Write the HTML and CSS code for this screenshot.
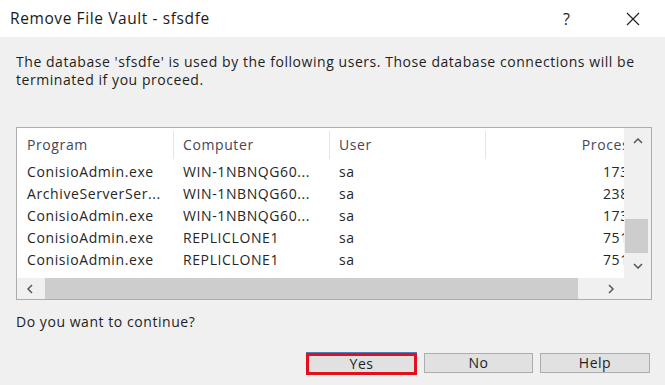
FILE: index.html
```html
<!DOCTYPE html>
<html lang="en">
<head>
    <meta charset="UTF-8">
    <title>Remove File Vault - sfsdfe</title>
    <link rel="stylesheet" href="styles.css">
</head>
<body>
    <div class="dialog">
        <div class="titlebar">
            <span class="title">Remove File Vault - sfsdfe</span>
            <div class="tb-buttons">
                <span class="tb-help">?</span>
                <svg class="tb-close" width="14" height="14" viewBox="0 0 14 14">
                    <path d="M1 1 L13 13 M13 1 L1 13" stroke="#222" stroke-width="1.2" fill="none"/>
                </svg>
            </div>
        </div>

        <div class="content">
            <p class="msg">The database 'sfsdfe' is used by the following users. Those database connections will be terminated if you proceed.</p>

            <div class="listbox">
                <div class="list-main">
                    <div class="list-area">
                        <div class="grid">
                            <div class="hd">Program</div>
                            <div class="hd">Computer</div>
                            <div class="hd">User</div>
                            <div class="hd num">Process ID</div>

                            <div>ConisioAdmin.exe</div><div>WIN-1NBNQG60...</div><div>sa</div><div class="num">17356</div>
                            <div>ArchiveServerSer...</div><div>WIN-1NBNQG60...</div><div>sa</div><div class="num">23812</div>
                            <div>ConisioAdmin.exe</div><div>WIN-1NBNQG60...</div><div>sa</div><div class="num">17324</div>
                            <div>ConisioAdmin.exe</div><div>REPLICLONE1</div><div>sa</div><div class="num">75112</div>
                            <div>ConisioAdmin.exe</div><div>REPLICLONE1</div><div>sa</div><div class="num">75148</div>
                        </div>
                    </div>
                    <div class="vscroll">
                        <div class="arrow">
                            <svg width="10" height="6" viewBox="0 0 10 6"><path d="M1 5 L5 1 L9 5" stroke="#555" stroke-width="1.5" fill="none"/></svg>
                        </div>
                        <div class="vtrack"><div class="vthumb"></div></div>
                        <div class="arrow">
                            <svg width="10" height="6" viewBox="0 0 10 6"><path d="M1 1 L5 5 L9 1" stroke="#555" stroke-width="1.5" fill="none"/></svg>
                        </div>
                    </div>
                </div>
                <div class="hscroll-row">
                    <div class="hscroll">
                        <div class="arrow">
                            <svg width="6" height="10" viewBox="0 0 6 10"><path d="M5 1 L1 5 L5 9" stroke="#555" stroke-width="1.5" fill="none"/></svg>
                        </div>
                        <div class="htrack"><div class="hthumb"></div></div>
                        <div class="arrow">
                            <svg width="6" height="10" viewBox="0 0 6 10"><path d="M1 1 L5 5 L1 9" stroke="#555" stroke-width="1.5" fill="none"/></svg>
                        </div>
                    </div>
                    <div class="corner"></div>
                </div>
            </div>

            <p class="question">Do you want to continue?</p>

            <div class="buttons">
                <button class="btn btn-yes">Yes</button>
                <button class="btn btn-no">No</button>
                <button class="btn btn-help">Help</button>
            </div>
        </div>
    </div>
</body>
</html>
```

FILE: styles.css
```css
body {
    margin: 0;
    padding: 0;
    font-family: "Open Sans", "Noto Sans", sans-serif;
    background: #f0f0f0;
    color: #1e1e1e;
}
.dialog {
    width: 665px;
    height: 385px;
    background: #f0f0f0;
    overflow: hidden;
}
.titlebar {
    height: 37px;
    background: #fff;
    display: flex;
    align-items: center;
    justify-content: space-between;
    padding: 0 25px 0 10px;
}
.title {
    font-size: 15.5px;
    letter-spacing: 0.6px;
    color: #1a1a1a;
    padding-bottom: 2px;
}
.tb-buttons {
    display: flex;
    align-items: center;
    gap: 56px;
}
.tb-help {
    font-size: 16px;
    color: #222;
}
.content {
    padding: 16px 13px 0 16px;
}
.msg {
    margin: 0;
    font-size: 14px;
    letter-spacing: 0.55px;
    line-height: 18px;
    color: #1e1e1e;
}
.listbox {
    margin-top: 38px;
    width: 634px;
    border: 1px solid #adadad;
    background: #fff;
}
.list-main {
    display: flex;
    height: 150px;
}
.list-area {
    width: 607px;
    overflow: hidden;
}
.grid {
    display: grid;
    grid-template-columns: 157px 156px 156px 172px;
    grid-template-rows: 33px repeat(5, 22px);
    font-size: 14px;
    letter-spacing: 0.6px;
    color: #262626;
}
.grid > div {
    padding-left: 10px;
    line-height: 22px;
    white-space: nowrap;
    overflow: hidden;
}
.grid .hd {
    line-height: 33px;
    color: #464658;
    position: relative;
}
.grid .hd::after {
    content: "";
    position: absolute;
    right: 0;
    top: 3px;
    bottom: 2px;
    width: 1px;
    background: #e5e5e5;
}
.grid .hd.num::after {
    display: none;
}
.grid .num {
    text-align: right;
    padding-right: 12px;
}
.grid .hd.num {
    padding-right: 2px;
}
.grid > div:nth-child(4n+2),
.grid > div:nth-child(4n+3) {
    padding-left: 9px;
}
.vscroll {
    width: 27px;
    background: #f0f0f0;
    display: flex;
    flex-direction: column;
}
.vscroll .arrow {
    height: 26px;
    display: flex;
    align-items: center;
    justify-content: center;
}
.vtrack {
    flex: 1;
    padding-top: 66px;
}
.vthumb {
    margin: 0 3px 0 1px;
    height: 34px;
    background: #cdcdcd;
}
.hscroll-row {
    display: flex;
    height: 21px;
}
.hscroll {
    width: 607px;
    display: flex;
    background: #f0f0f0;
}
.hscroll .arrow {
    width: 26px;
    display: flex;
    align-items: center;
    justify-content: center;
}
.htrack {
    flex: 1;
    padding: 0 2px 0 2px;
}
.hthumb {
    width: 533px;
    height: 100%;
    background: #cdcdcd;
}
.corner {
    width: 27px;
    background: #f0f0f0;
}
.question {
    margin: 13px 0 0;
    font-size: 14px;
    letter-spacing: 0.55px;
    line-height: 18px;
}
.buttons {
    margin-top: 22px;
    display: flex;
    justify-content: flex-end;
    align-items: flex-start;
    gap: 7px;
    padding-right: 2px;
}
.btn {
    font-family: "Open Sans", "Noto Sans", sans-serif;
    font-size: 14px;
    letter-spacing: 0.5px;
    color: #1e1e1e;
    background: #e1e1e1;
    border: 1px solid #adadad;
    height: 20px;
    padding: 0;
    line-height: 16px;
}
.btn-yes {
    width: 111px;
    height: 22px;
    border: 3px solid #e3101c;
    box-shadow: 0 -1px 0 #4a7fc0;
}
.btn-no {
    width: 109px;
}
.btn-help {
    width: 110px;
}
```
